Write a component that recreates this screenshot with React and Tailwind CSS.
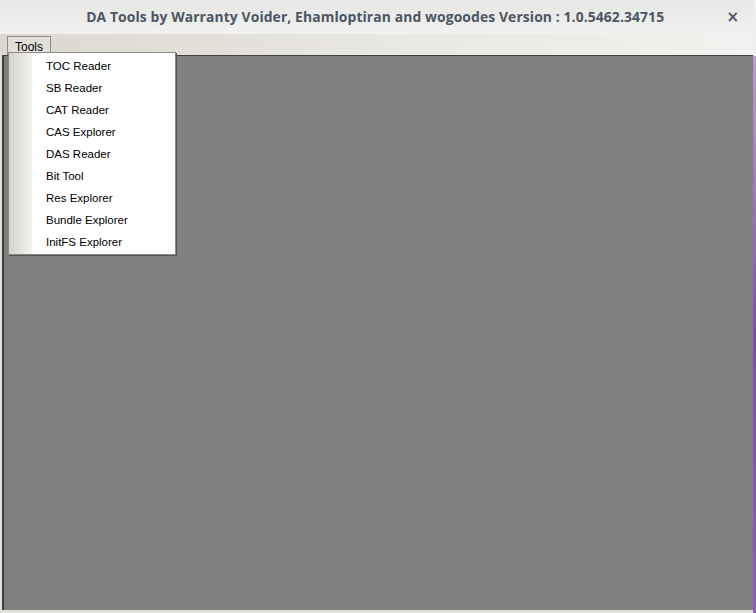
import React from "react";

const items = [
  "TOC Reader",
  "SB Reader",
  "CAT Reader",
  "CAS Explorer",
  "DAS Reader",
  "Bit Tool",
  "Res Explorer",
  "Bundle Explorer",
  "InitFS Explorer",
];

export default function App() {
  return (
    <div className="flex h-[613px] w-[756px] overflow-hidden bg-[#e2e0da]">
      {/* WINDOW */}
      <div className="relative flex w-[753px] flex-col">
        {/* TITLE BAR */}
        <div className="flex h-[34px] items-center bg-gradient-to-b from-[#e6e6e5] to-[#f1f1f0] pr-[14px]">
          <div
            className="flex-1 pl-[24px] text-center text-[13.9px] font-bold tracking-[0.1px] text-[#4c5663]"
            style={{ fontFamily: '"Open Sans", sans-serif' }}
          >
            DA Tools by Warranty Voider, Ehamloptiran and wogoodes Version : 1.0.5462.34715
          </div>
          <span
            className="text-[15px] font-bold leading-none text-[#4c5663]"
            style={{ fontFamily: '"DejaVu Sans", sans-serif' }}
          >
            ×
          </span>
        </div>

        {/* MENU BAR */}
        <div
          className="flex h-[21px] items-end bg-gradient-to-r from-[#dcd8d0] via-[#e9e7e2] to-[#f2f2f0] pl-[7px]"
          style={{ fontFamily: '"Liberation Sans", sans-serif' }}
        >
          <div className="h-[19px] border border-b-0 border-[#8b8b8b] bg-[#e3e0d9] px-[7px] pt-[3px] text-[12px] leading-[15px] text-black">
            Tools
          </div>
        </div>

        {/* CONTENT */}
        <div className="ml-[2px] flex-1 border-t border-l-2 border-[#404040] bg-[#808080]" />
        <div className="h-[3px] bg-[#e2e0da]" />

        {/* DROPDOWN */}
        <div
          className="absolute left-[8px] top-[52px] flex w-[168px] border border-[#8a8a8a] bg-white pt-[3px] shadow-[1px_1px_0_#555]"
          style={{ fontFamily: '"Liberation Sans", sans-serif' }}
        >
          <div className="absolute bottom-0 left-0 top-0 w-[23px] bg-gradient-to-r from-[#d6d3cb] to-[#f3f2ee]" />
          <div className="relative flex flex-col pl-[37px]">
            {items.map((item) => (
              <div key={item} className="flex h-[22px] items-center text-[11.5px] text-black">
                {item}
              </div>
            ))}
          </div>
        </div>
      </div>

      {/* DESKTOP EDGE */}
      <div className="flex w-[3px] flex-col">
        <div className="h-[56px] bg-[#f0f0ee]" />
        <div className="flex-1 bg-gradient-to-b from-[#b9a0d0] via-[#7a4fb0] to-[#8a5fc0]" />
      </div>
    </div>
  );
}
